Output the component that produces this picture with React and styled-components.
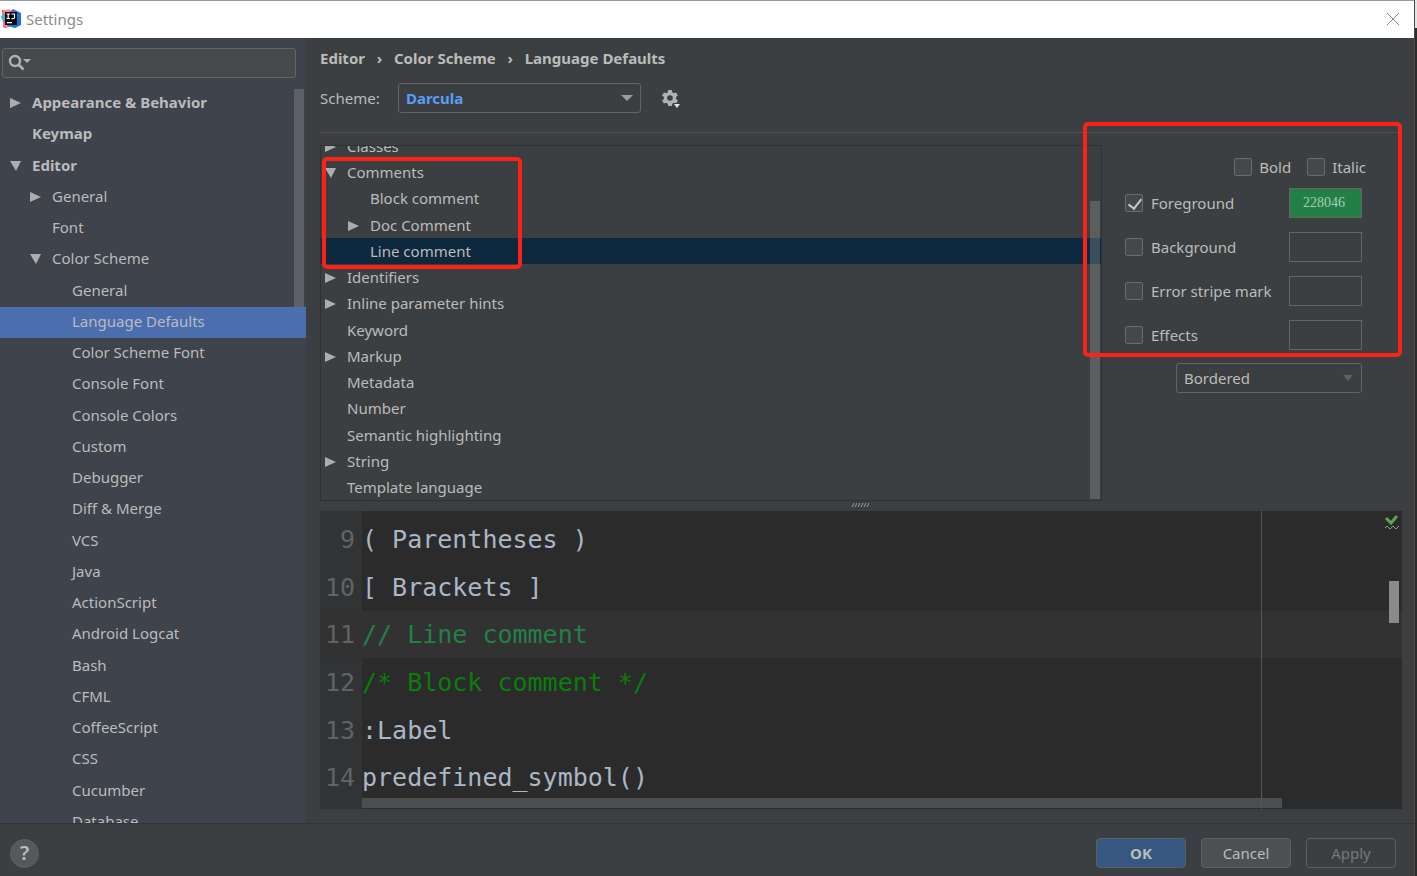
import React, { useState } from 'react'
import styled, { createGlobalStyle, css } from 'styled-components'

const settingsTree = [
    { label: 'Appearance & Behavior', level: 0, arrow: 'closed', bold: true },
    { label: 'Keymap', level: 0, bold: true },
    { label: 'Editor', level: 0, arrow: 'open', bold: true },
    { label: 'General', level: 1, arrow: 'closed' },
    { label: 'Font', level: 1 },
    { label: 'Color Scheme', level: 1, arrow: 'open' },
    { label: 'General', level: 2 },
    { label: 'Language Defaults', level: 2, selected: true },
    { label: 'Color Scheme Font', level: 2 },
    { label: 'Console Font', level: 2 },
    { label: 'Console Colors', level: 2 },
    { label: 'Custom', level: 2 },
    { label: 'Debugger', level: 2 },
    { label: 'Diff & Merge', level: 2 },
    { label: 'VCS', level: 2 },
    { label: 'Java', level: 2 },
    { label: 'ActionScript', level: 2 },
    { label: 'Android Logcat', level: 2 },
    { label: 'Bash', level: 2 },
    { label: 'CFML', level: 2 },
    { label: 'CoffeeScript', level: 2 },
    { label: 'CSS', level: 2 },
    { label: 'Cucumber', level: 2 },
    { label: 'Database', level: 2 },
]

const attributeTree = [
    { label: 'Classes', level: 0, arrow: 'closed' },
    { label: 'Comments', level: 0, arrow: 'open' },
    { label: 'Block comment', level: 1 },
    { label: 'Doc Comment', level: 1, arrow: 'closed' },
    { label: 'Line comment', level: 1, selected: true },
    { label: 'Identifiers', level: 0, arrow: 'closed' },
    { label: 'Inline parameter hints', level: 0, arrow: 'closed' },
    { label: 'Keyword', level: 0 },
    { label: 'Markup', level: 0, arrow: 'closed' },
    { label: 'Metadata', level: 0 },
    { label: 'Number', level: 0 },
    { label: 'Semantic highlighting', level: 0 },
    { label: 'String', level: 0, arrow: 'closed' },
    { label: 'Template language', level: 0 },
]

const codeLines = [
    { number: 9, text: '( Parentheses )' },
    { number: 10, text: '[ Brackets ]' },
    { number: 11, text: '// Line comment', color: '#228046', current: true },
    { number: 12, text: '/* Block comment */', color: '#0a7d0a' },
    { number: 13, text: ':Label' },
    { number: 14, text: 'predefined_symbol()' },
]

function Arrow({ state }) {
    return (
        <ArrowBox>
            {state === 'closed' && (
                <svg width="11" height="12" viewBox="0 0 11 12"><path d="M0 1v10l11-5z" fill="#adadad" /></svg>
            )}
            {state === 'open' && (
                <svg width="12" height="12" viewBox="0 0 12 12"><path d="M0 1h11l-5 10z" fill="#adadad" /></svg>
            )}
        </ArrowBox>
    )
}

function Logo() {
    return (
        <svg width="20" height="20" viewBox="0 0 20 20">
            <path d="M1 1l9 1v15l-7 2-1-5z" fill="#f4416f" />
            <path d="M2 2l6-2 3 4-8 4z" fill="#f98a7c" />
            <path d="M0 7l4-2v7l-3-1z" fill="#37b5e5" />
            <path d="M2 12l5 4-1 3-4-1z" fill="#fb6f9a" />
            <path d="M9 3l3-3 8 4v12l-6 3-7-2z" fill="#1276d8" />
            <path d="M11 1l4 1-2 2-4-1z" fill="#8c55c9" />
            <path d="M4 3h12v13H4z" fill="#0b0b0f" />
            <path d="M5.500 5h3.500M7.200 5v4.500M5.500 9.500h3.500M10.500 5h3v3.500q0 1.200-1.300 1.200h-1.700" fill="none" stroke="#fff" strokeWidth="1.200" />
            <path d="M6 13h5v1.300H6z" fill="#fff" />
        </svg>
    )
}

function ColorOption({ id, label, value, checked, onToggle }) {
    return (
        <OptionRow>
            <Check id={id} type="checkbox" checked={checked} onChange={onToggle} />
            <label htmlFor={id}>{label}</label>
            <Swatch type="button" $color={value} aria-label={`${label} color`}>{value}</Swatch>
        </OptionRow>
    )
}

function App() {
    const [search, setSearch] = useState('')
    const [checks, setChecks] = useState({ foreground: true })
    const toggle = (name) => () => setChecks({ ...checks, [name]: !checks[name] })

    return (
        <Desktop>
            <GlobalStyle />
            <Dialog>
                <TitleBar>
                    <Logo />
                    <Title>Settings</Title>
                    <CloseButton type="button" aria-label="Close">
                        <svg width="14" height="14" viewBox="0 0 14 14"><path d="M1 1l12 12M13 1L1 13" stroke="#858585" fill="none" /></svg>
                    </CloseButton>
                </TitleBar>
                <Body>
                    <Sidebar>
                        <SearchBox>
                            <svg width="24" height="18" viewBox="0 0 24 18">
                                <circle cx="7" cy="7" r="5" fill="none" stroke="#afb1b3" strokeWidth="2.4" />
                                <path d="M10.500 10.500l5 5" stroke="#afb1b3" strokeWidth="2.600" />
                                <path d="M15 5h8l-4 4z" fill="#afb1b3" />
                            </svg>
                            <input aria-label="Search settings" value={search} onChange={(e) => setSearch(e.target.value)} />
                        </SearchBox>
                        <SettingsList>
                            {settingsTree.map((item, i) => (
                                <SettingsRow key={i} $level={item.level} $bold={item.bold} $selected={item.selected}>
                                    <Arrow state={item.arrow} />
                                    {item.label}
                                </SettingsRow>
                            ))}
                            <SidebarThumb />
                        </SettingsList>
                    </Sidebar>
                    <Main>
                        <Breadcrumb>
                            <span>Editor</span>
                            <i>›</i>
                            <span>Color Scheme</span>
                            <i>›</i>
                            <span>Language Defaults</span>
                        </Breadcrumb>
                        <SchemeRow>
                            <label htmlFor="scheme">Scheme:</label>
                            <SelectBox $width="243px">
                                <SchemeSelect id="scheme"><option>Darcula</option></SchemeSelect>
                                <svg width="12" height="8" viewBox="0 0 12 8"><path d="M0 1h12L6 7z" fill="#9a9c9e" /></svg>
                            </SelectBox>
                            <GearButton type="button" aria-label="Scheme actions">
                                <svg width="20" height="20" viewBox="0 0 20 20">
                                    <path d="M7.200 1h3.600l.5 2.300 1.500.9 2.300-.8 1.800 3.100-1.800 1.600v1.800l1.800 1.600-1.800 3.100-2.300-.8-1.500.9-.5 2.300H7.200l-.5-2.300-1.500-.9-2.300.8-1.800-3.100 1.800-1.600V8.100L1.100 6.500l1.800-3.100 2.300.8 1.500-.9zM9 6.200a2.800 2.800 0 100 5.600 2.800 2.800 0 000-5.600z" fill="#afb1b3" fillRule="evenodd" />
                                    <path d="M12 14h8v5h-8z" fill="#3c3f41" />
                                    <path d="M13 15h6l-3 4z" fill="#e8e8e8" />
                                </svg>
                            </GearButton>
                        </SchemeRow>
                        <Upper>
                            <TreePanel>
                                <TreeViewport>
                                    <AttributeList>
                                        {attributeTree.map((item) => (
                                            <AttributeRow key={item.label} $level={item.level} $selected={item.selected}>
                                                <Arrow state={item.arrow} />
                                                {item.label}
                                            </AttributeRow>
                                        ))}
                                    </AttributeList>
                                    <TreeThumb />
                                </TreeViewport>
                                <TreeMark />
                            </TreePanel>
                            <Options>
                                <StyleRow>
                                    <Check id="bold" type="checkbox" checked={!!checks.bold} onChange={toggle('bold')} />
                                    <label htmlFor="bold">Bold</label>
                                    <Check id="italic" type="checkbox" checked={!!checks.italic} onChange={toggle('italic')} />
                                    <label htmlFor="italic">Italic</label>
                                </StyleRow>
                                <OptionList>
                                    <ColorOption id="foreground" label="Foreground" value="228046" checked={!!checks.foreground} onToggle={toggle('foreground')} />
                                    <ColorOption id="background" label="Background" checked={!!checks.background} onToggle={toggle('background')} />
                                    <ColorOption id="stripe" label="Error stripe mark" checked={!!checks.stripe} onToggle={toggle('stripe')} />
                                    <ColorOption id="effects" label="Effects" checked={!!checks.effects} onToggle={toggle('effects')} />
                                </OptionList>
                                <EffectBox $width="186px">
                                    <EffectSelect aria-label="Effect type"><option>Bordered</option></EffectSelect>
                                    <svg width="12" height="8" viewBox="0 0 12 8"><path d="M1 1h10L6 7z" fill="#5e6163" /></svg>
                                </EffectBox>
                                <OptionsMark />
                            </Options>
                        </Upper>
                        <Splitter>
                            <svg width="20" height="6" viewBox="0 0 20 6">
                                <path d="M1 5l2-4M4 5l2-4M7 5l2-4M10 5l2-4M13 5l2-4M16 5l2-4" stroke="#9a9c9e" strokeWidth="1" />
                            </svg>
                        </Splitter>
                        <Preview>
                            {codeLines.map((line) => (
                                <CodeLine key={line.number} $current={line.current} $color={line.color}>
                                    <LineNumber>{line.number}</LineNumber>
                                    <code>{line.text}</code>
                                </CodeLine>
                            ))}
                            <ScrollThumb />
                            <MarginLine />
                            <Inspection>
                                <svg width="16" height="16" viewBox="0 0 16 16">
                                    <path d="M2 4l5 5 6-7" fill="none" stroke="#5aa551" strokeWidth="3" />
                                    <path d="M1 14l2-2 3 3 3-3 3 3 3-3" fill="none" stroke="#8b9a86" strokeWidth="1" />
                                </svg>
                            </Inspection>
                            <PreviewThumb />
                        </Preview>
                    </Main>
                </Body>
                <Footer>
                    <HelpButton type="button">?</HelpButton>
                    <Button type="button" $primary>OK</Button>
                    <Button type="button">Cancel</Button>
                    <Button type="button" disabled>Apply</Button>
                </Footer>
            </Dialog>
        </Desktop>
    )
}

export default App

const GlobalStyle = createGlobalStyle`
    *{
        box-sizing: border-box;
    }
    body{
        margin: 0;
        background: #2b2b2b;
        color: #bbbbbb;
        font: 15px/20px "Noto Sans", "Open Sans", sans-serif;
    }
    button, input, select{
        font: inherit;
        color: inherit;
    }
    svg{
        display: block;
        flex: none;
    }
`
const Desktop = styled.div`
    height: 100vh;
    padding-right: 2px;
    background: linear-gradient(#e4e4e4 28px, #2b2b2b 28px);
`
const Dialog = styled.div`
    height: 100%;
    display: flex;
    flex-direction: column;
    background: #3c3f41;
    border-right: 1px solid #4a4a4a;
    overflow: hidden;
`
const TitleBar = styled.header`
    height: 38px;
    flex: none;
    display: flex;
    align-items: center;
    gap: 5px;
    padding: 0 14px 2px 1px;
    background: #fff;
    border-top: 1px solid #9b9b9b;
`
const Title = styled.span`
    flex: 1;
    color: #8c8c8c;
`
const CloseButton = styled.button`
    display: flex;
    padding: 0;
    border: 0;
    background: none;
`
const Body = styled.div`
    flex: 1;
    min-height: 0;
    display: flex;
`
const Sidebar = styled.nav`
    width: 306px;
    flex: none;
    display: flex;
    flex-direction: column;
    background: #3e434c;
`
const SearchBox = styled.div`
    height: 30px;
    flex: none;
    display: flex;
    align-items: center;
    margin: 10px 10px 10px 2px;
    padding: 0 5px;
    background: #45494a;
    border: 1px solid #646464;
    border-radius: 3px;
    input{
        flex: 1;
        min-width: 0;
        border: 0;
        outline: 0;
        background: none;
    }
`
const SettingsList = styled.ul`
    position: relative;
    flex: 1;
    min-height: 0;
    margin: 0;
    padding: 0;
    overflow: hidden;
    list-style: none;
`
const ArrowBox = styled.span`
    width: 22px;
    flex: none;
    padding-top: 2px;
`
const SettingsRow = styled.li`
    height: 31px;
    display: flex;
    align-items: center;
    padding-bottom: 4px;
    padding-left: ${(props) => 10 + props.$level * 20}px;
    font-weight: ${(props) => props.$bold ? 700 : 400};
    background: ${(props) => props.$selected ? '#4b6eaf' : 'none'};
    &:nth-child(4n + 2){
        height: 32px;
    }
`
const SidebarThumb = styled.div`
    position: absolute;
    top: 1px;
    right: 2px;
    width: 10px;
    height: 218px;
    background: rgba(166,166,166,0.3);
`
const Main = styled.main`
    flex: 1;
    min-width: 0;
    display: flex;
    flex-direction: column;
    padding: 10px 12px 14px 14px;
`
const Breadcrumb = styled.div`
    display: flex;
    font-weight: 700;
    i{
        width: 29px;
        text-align: center;
        font-style: normal;
    }
`
const SchemeRow = styled.div`
    display: flex;
    align-items: center;
    padding: 15px 0 19px;
    border-bottom: 1px solid #515151;
    label{
        width: 78px;
    }
`
const SelectBox = styled.div`
    position: relative;
    width: ${(props) => props.$width};
    svg{
        position: absolute;
        right: 8px;
        top: 11px;
        pointer-events: none;
    }
`
const selectStyle = css`
    display: block;
    width: 100%;
    height: 30px;
    padding: 0 7px;
    appearance: none;
    background: #3c3f41;
    border: 1px solid #646464;
    border-radius: 3px;
`
const SchemeSelect = styled.select`
    ${selectStyle}
    color: #589df6;
    font-weight: 700;
`
const EffectSelect = styled.select`
    ${selectStyle}
`
const GearButton = styled.button`
    margin-left: 20px;
    padding: 2px 0 0;
    border: 0;
    background: none;
`
const Upper = styled.div`
    display: flex;
    padding-top: 12px;
`
const TreePanel = styled.div`
    position: relative;
    flex: 1;
    min-width: 0;
`
const TreeViewport = styled.div`
    position: relative;
    height: 356px;
    overflow: hidden;
    border: 1px solid #2f3234;
`
const AttributeList = styled.ul`
    margin: -13px 0 0;
    padding: 0;
    list-style: none;
`
const AttributeRow = styled.li`
    height: 26px;
    display: flex;
    align-items: center;
    padding-left: ${(props) => 4 + props.$level * 23}px;
    background: ${(props) => props.$selected ? '#0d293e' : 'none'};
    &:nth-child(4n){
        height: 27px;
    }
`
const TreeThumb = styled.div`
    position: absolute;
    right: 1px;
    bottom: 1px;
    width: 10px;
    height: 298px;
    background: rgba(166,166,166,0.3);
`
const mark = css`
    position: absolute;
    border: 4px solid #fb2318;
    border-radius: 5px;
    pointer-events: none;
`
const TreeMark = styled.div`
    ${mark}
    left: 2px;
    top: 12px;
    width: 200px;
    height: 112px;
`
const OptionsMark = styled.div`
    ${mark}
    left: -19px;
    right: 0;
    top: -23px;
    height: 235px;
`
const Options = styled.div`
    position: relative;
    width: 300px;
    flex: none;
    padding: 12px 40px 0 23px;
`
const StyleRow = styled.div`
    display: flex;
    justify-content: flex-end;
    align-items: center;
    gap: 7px;
    margin-right: -4px;
    label + input{
        margin-left: 9px;
    }
`
const Check = styled.input`
    width: 18px;
    height: 18px;
    flex: none;
    margin: 0;
    appearance: none;
    background: #43494a;
    border: 1px solid #6b6b6b;
    border-radius: 2px;
    &:checked::after{
        content: '';
        display: block;
        width: 6px;
        height: 11px;
        margin: 1px 0 0 5px;
        border: solid #c8c8c8;
        border-width: 0 2px 2px 0;
        transform: rotate(38deg);
    }
`
const OptionList = styled.div`
    display: grid;
    gap: 14px;
    padding: 11px 0 13px;
`
const OptionRow = styled.div`
    display: flex;
    align-items: center;
    gap: 8px;
    label{
        flex: 1;
    }
`
const Swatch = styled.button`
    width: 73px;
    height: 30px;
    padding: 0 3px 0 0;
    font: 14px/18px "Liberation Serif", serif;
    color: #a9c9b4;
    background: ${(props) => props.$color ? '#' + props.$color : 'none'};
    border: 1px solid #646464;
`
const EffectBox = styled(SelectBox)`
    margin-left: auto;
`
const Splitter = styled.div`
    display: flex;
    justify-content: center;
    padding: 1px 0 3px;
`
const Preview = styled.div`
    position: relative;
    flex: 1;
    min-height: 0;
    overflow: hidden;
    padding-top: 4px;
    color: #a9b7c6;
    background: linear-gradient(90deg, #313335 42px, #2b2b2b 42px);
    font: 25px/47px "DejaVu Sans Mono", monospace;
`
const CodeLine = styled.div`
    height: 48px;
    display: flex;
    align-items: center;
    background: ${(props) => props.$current ? '#323232' : 'none'};
    &:nth-child(3n){
        height: 47px;
    }
    code{
        font: inherit;
        color: ${(props) => props.$color || 'inherit'};
        white-space: pre;
    }
`
const LineNumber = styled.span`
    width: 42px;
    padding-right: 7px;
    text-align: right;
    color: #606366;
`
const ScrollThumb = styled.div`
    position: absolute;
    left: 42px;
    right: 120px;
    bottom: 1px;
    height: 10px;
    background: #4d4d4d;
`
const MarginLine = styled.div`
    position: absolute;
    top: 0;
    bottom: 0;
    right: 140px;
    width: 1px;
    background: #555;
`
const Inspection = styled.div`
    position: absolute;
    top: 3px;
    right: 2px;
`
const PreviewThumb = styled.div`
    position: absolute;
    top: 70px;
    right: 3px;
    width: 10px;
    height: 42px;
    background: #8a8a8a;
`
const Footer = styled.footer`
    height: 53px;
    flex: none;
    display: flex;
    align-items: center;
    gap: 15px;
    padding: 6px 18px 0 10px;
    border-top: 1px solid #323436;
`
const HelpButton = styled.button`
    width: 29px;
    height: 29px;
    margin-right: auto;
    padding: 0;
    border: 1px solid #5e6163;
    border-radius: 50%;
    background: #55595b;
    font-size: 20px;
    font-weight: 600;
`
const Button = styled.button`
    width: 90px;
    height: 30px;
    padding: 0;
    font-weight: ${(props) => props.$primary ? 700 : 400};
    background: ${(props) => props.$primary ? '#365880' : '#4c5052'};
    border: 1px solid #5e6060;
    border-radius: 4px;
    &:disabled{
        color: #777777;
        background: none;
    }
`
